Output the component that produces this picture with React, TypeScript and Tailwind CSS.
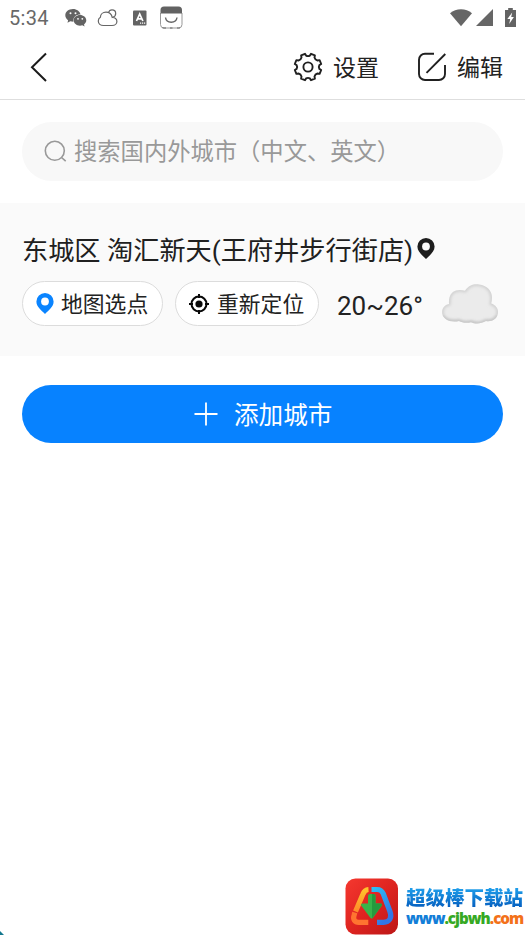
import type { ReactNode } from 'react';

const fontStack = "font-['Roboto','Noto_Sans_CJK_SC',sans-serif]";

function StatusBar() {
  return (
    <div className="flex h-[36px] items-center pb-px pl-[9px] pr-[9px] text-[#666]">
      <span className="w-[56px] pt-px text-[20px] leading-[24px] tracking-[0.3px] text-[#686868]">5:34</span>
      <svg width="22" height="20" viewBox="0 0 22 20" fill="#636363">
        <path d="M8 1C3.6 1 .3 3.8.3 7.3c0 2 1.100 3.700 2.800 4.900L2.500 14.700l2.800-1.400c1 .3 2 .4 3.100.4C7.700 9.300 11 6.600 15.600 6.600 14.900 3.300 11.800 1 8 1z" />
        <path d="M21.300 12.300c0-3-2.900-5.300-6.300-5.300s-6.400 2.300-6.400 5.300 2.900 5.400 6.400 5.400c.8 0 1.600-.1 2.300-.4l2.300 1.300-.6-2.100c1.400-1 2.300-2.500 2.300-4.200z" />
        <g fill="#fff"><circle cx="5.500" cy="5.300" r="1" /><circle cx="10.500" cy="5.300" r="1" /><circle cx="13" cy="10.800" r=".9" /><circle cx="17.300" cy="10.800" r=".9" /></g>
      </svg>
      <svg className="ml-[10px]" width="22" height="20" viewBox="0 0 22 20" fill="none" stroke="#666" strokeWidth="1.200">
        <path d="M6.500 17.500h8.500c3 0 4.900-1.900 4.900-4.100 0-2.500-2-4.100-4.600-3.900C14.500 6 12 4.200 9 4.200c-3.300 0-5.500 2.200-5.600 5C2 10 1.300 11.500 1.300 13c0 2.600 2.200 4.500 5.200 4.500z" />
        <path d="M11.500 4.700C12 2.900 13.300 1.800 15 1.800c2.100 0 3.700 1.600 3.700 3.600 0 1.900-1.100 3.300-3 3.700" />
      </svg>
      <svg className="ml-[14px]" width="14" height="16" viewBox="0 0 14 16">
        <rect x="0" y="0.500" width="13.500" height="15" rx="1" fill="#636363" />
        <path d="M3.500 11 6.700 4 9.900 11M4.700 8.800h4" fill="none" stroke="#fff" strokeWidth="1.700" />
        <path d="M7 13.200h1.200M9 13.200h1.200M11 13.200h1.200" stroke="#fff" strokeWidth="1.200" />
      </svg>
      <svg className="ml-[13px]" width="23" height="23" viewBox="0 0 23 23">
        <path d="M.5 7V18.500a3.500 3.500 0 0 0 3.500 3.500H18.500a3.500 3.500 0 0 0 3.500-3.500V7" fill="none" stroke="#999" />
        <path d="M2.500 22H6M10 22h2.500M17 22h3" stroke="#666" />
        <path d="M.5 7.500V4A3.500 3.500 0 0 1 4 .5h14.500A3.500 3.500 0 0 1 22 4v3.500z" fill="#626262" />
        <path d="M5.500 11.500c.8 6.300 10.700 6.300 11.500 0" fill="none" stroke="#666" strokeWidth="1.400" />
      </svg>
      <svg className="ml-auto" width="22" height="18" viewBox="0 0 22 18"><path d="M0 4.300C6-1.100 16-1.100 22 4.300L11 17.300z" fill="#666" /></svg>
      <svg className="ml-[4px]" width="17" height="17" viewBox="0 0 17 17"><path d="M17 0v17H0z" fill="#666" /></svg>
      <svg className="ml-[12px]" width="11" height="19" viewBox="0 0 11 19">
        <path d="M3.200 0h4.600v2H11v17H0V2h3.200z" fill="#636363" />
        <path d="M7.200 4.500 2.300 11h2.900l-1 5 4.700-6.900H6.200z" fill="#fff" />
      </svg>
    </div>
  );
}

function GearIcon() {
  return (
    <svg width="30" height="30" viewBox="0 0 30 30" fill="none" stroke="#202020" strokeWidth="1.900" strokeLinejoin="round">
      <path d="M12 1.800 13.100 3.600Q15 4.700 16.900 3.600L18 1.800 21.900 3.400 21.500 5.500Q22.100 7.900 24.500 8.500L26.600 8.100 28.200 12 26.400 13.100Q25.300 15 26.400 16.900L28.200 18 26.600 21.900 24.500 21.500Q22.100 22.100 21.500 24.500L21.900 26.600 18 28.200 16.900 26.400Q15 25.300 13.100 26.400L12 28.200 8.100 26.600 8.500 24.500Q7.900 22.100 5.500 21.500L3.400 21.900 1.800 18 3.600 16.900Q4.700 15 3.600 13.100L1.800 12 3.400 8.100 5.500 8.500Q7.900 7.900 8.500 5.500L8.100 3.400z" />
      <circle cx="15" cy="15" r="4.600" />
    </svg>
  );
}

function Header() {
  return (
    <header className="flex h-[64px] items-center border-b border-[#dedede] pb-px pl-[30px] pr-[22px] text-[23px] leading-[34px] text-[#222]">
      <svg width="18" height="30" viewBox="0 0 18 30" fill="none" stroke="#1b1b1b" strokeWidth="2"><path d="M16 1.500 2 15.200 16 29" /></svg>
      <div className="ml-auto flex items-center">
        <GearIcon />
        <span className="ml-[10px] pt-[3px]">设置</span>
      </div>
      <div className="ml-[38px] flex items-center">
        <svg width="30" height="30" viewBox="0 0 30 30" fill="none" stroke="#202020" strokeWidth="1.900">
          <path d="M17 1.700H8A6 6 0 0 0 2 7.700V22a6 6 0 0 0 6 6h14a6 6 0 0 0 6-6V13M9.500 20.800 28.300 2" />
        </svg>
        <span className="ml-[10px] pt-[3px]">编辑</span>
      </div>
    </header>
  );
}

function Pin({ color, hole, className }: { color: string; hole: string; className: string }) {
  return (
    <svg className={className} viewBox="0 0 18 21">
      <path d="M9 0a8.600 8.600 0 0 0-8.600 8.600C.4 13.800 5.300 17.500 9 21c3.700-3.500 8.600-7.200 8.600-12.400A8.600 8.600 0 0 0 9 0z" fill={color} />
      <circle cx="9" cy="8.500" r="3.900" fill={hole} />
    </svg>
  );
}

function Chip({ className, children }: { className: string; children: ReactNode }) {
  return (
    <button className={`flex h-[45px] items-center rounded-full border border-[#dcdcdc] bg-white text-[21.8px] leading-[32px] text-[#222] ${className}`}>
      {children}
    </button>
  );
}

function Cloud() {
  return (
    <svg width="58" height="40" viewBox="0 0 58 40">
      <defs>
        <clipPath id="cloudShape">
          <path d="M8 20C7.500 13 10 8 15 6.500c3-1 6-.7 9 .3C28 1 33-.3 38 .5c8 .8 13 6.500 13 13 0 2-.2 4-.8 6C55 21 57.500 25 57 29c-.8 6-6 9-12 8-5 3-11 3-15 1.200-5 1.300-9 .3-12-1.200C9 39 2 35 1.200 29.500.6 25 3 21 8 20z" />
        </clipPath>
        <filter id="soft"><feGaussianBlur stdDeviation="1.800" /></filter>
      </defs>
      <g clipPath="url(#cloudShape)">
        <path d="M0 0h58v40H0z" fill="#ebebeb" />
        <path d="M8 20C7.500 13 10 8 15 6.500c3-1 6-.7 9 .3C28 1 33-.3 38 .5c8 .8 13 6.500 13 13 0 2-.2 4-.8 6C55 21 57.500 25 57 29c-.8 6-6 9-12 8-5 3-11 3-15 1.200-5 1.300-9 .3-12-1.200C9 39 2 35 1.200 29.500.6 25 3 21 8 20z" fill="none" stroke="#cdcdcd" strokeWidth="3" filter="url(#soft)" />
        <path d="M1 32c2 5 9 6 17 5 3 2 7 2.500 12 1.200 4 2 10 2 15-1.200 6 1 10-1 12-5" fill="none" stroke="#c2c2c2" strokeWidth="2.500" filter="url(#soft)" />
      </g>
    </svg>
  );
}

function Watermark() {
  return (
    <div className="flex h-[58px] w-[180px] items-center self-end">
      <svg width="54" height="57" viewBox="0 0 54 57" className="shrink-0">
        <defs>
          <linearGradient id="tile" x2="1" y2="1"><stop stopColor="#f5382f" /><stop offset=".5" stopColor="#de2420" /><stop offset="1" stopColor="#bc1717" /></linearGradient>
          <linearGradient id="blueBand" x2=".6" y2="1"><stop stopColor="#2cc0f5" /><stop offset="1" stopColor="#3376e6" /></linearGradient>
          <linearGradient id="goldBand" x2="0" y2="1"><stop stopColor="#ffc32b" /><stop offset="1" stopColor="#ff8a2b" /></linearGradient>
        </defs>
        <rect x=".5" y=".5" width="52.500" height="56" rx="10" fill="url(#tile)" />
        <g fill="none" strokeWidth="5.200" strokeLinejoin="round">
          <path d="M23.500 11.500c-3.500.2-4.500 2-5.500 4.500L10.500 33.500" stroke="url(#goldBand)" />
          <path d="M9.800 34.500 9 37.500c-1.200 4 .8 6.800 4.800 6.800h9.500" stroke="#ff7430" />
          <path d="M26.500 11.500h5.500c3.500 0 5 1.200 6.200 4L44.800 33c2.700 7-.4 11.300-6.300 11.300H32" stroke="url(#blueBand)" />
        </g>
        <path d="M23 18q0-2 2-2h3.500q2 0 2 2v7.500h5c1.600 0 2 1.200 1 2.400L27.800 40c-.8.800-1.500.8-2.300 0l-9-12.100c-1-1.200-.6-2.400 1-2.400H23z" fill="#38b54a" />
        <path d="M27 16h1.500q2 0 2 2v7.500h5c1.600 0 2 1.200 1 2.400L27 40.500z" fill="#269b3e" />
      </svg>
      <div className="ml-[7px] flex flex-col whitespace-nowrap pt-px">
        <div className="bg-linear-to-b from-[#25a9f2] to-[#075dbe] bg-clip-text font-['Noto_Sans_CJK_SC',sans-serif] text-[19.500px] font-black leading-[23px] text-transparent">超级棒下载站</div>
        <div className="flex font-['Open_Sans',sans-serif] text-[15.200px] font-extrabold leading-[21px] tracking-[-1px]">
          <span className="text-[#127ed8]">www</span><span className="text-[#36a923]">.cjbwh</span><span className="text-[#f37119]">.com</span>
        </div>
      </div>
    </div>
  );
}

export default function App() {
  return (
    <div className={`relative flex h-[935px] w-[525px] flex-col overflow-hidden bg-white ${fontStack}`}>
      <StatusBar />
      <Header />
      <div className="mx-[22px] mt-[22px] flex h-[59px] items-center rounded-full bg-[#f8f8f8] pl-[22px] text-[#999]">
        <svg width="23" height="23" viewBox="0 0 23 23" fill="none" stroke="#999" strokeWidth="1.600"><circle cx="10.800" cy="10.800" r="9.500" /><path d="m17.500 17.500 4.200 3.700" /></svg>
        <span className="ml-[7px] text-[23.3px] leading-[34px]">搜索国内外城市（中文、英文）</span>
      </div>
      <section className="mt-[22px] h-[153px] bg-[#fafafa] pl-[22px] pt-[28px]">
        <div className="flex h-[38px] items-center text-[26.200px] leading-[38px] text-[#202020]">
          <span className="whitespace-nowrap pt-[2px]">东城区 淘汇新天(王府井步行街店)</span>
          <Pin color="#1d1d1d" hole="#fafafa" className="-mt-[3px] ml-[4px] h-[21px] w-[18px]" />
        </div>
        <div className="mt-[12px] flex h-[45px] items-center">
          <Chip className="w-[141px] pl-[13px]">
            <Pin color="#0a84ff" hole="#fff" className="mr-[7px] h-[21px] w-[18px]" />
            <span className="pt-[2px]">地图选点</span>
          </Chip>
          <Chip className="ml-[12px] w-[144px] pl-[13px]">
            <svg className="mr-[8px]" width="20" height="20" viewBox="0 0 20 20"><circle cx="10" cy="10" r="7.500" fill="none" stroke="#080808" strokeWidth="2" /><circle cx="10" cy="10" r="3.600" fill="#080808" /><path d="M10 0v4M10 16v4M0 10h4M16 10h4" stroke="#080808" strokeWidth="2" /></svg>
            <span className="pt-[2px]">重新定位</span>
          </Chip>
          <span className="ml-[18px] w-[87px] pt-[4px] text-[26px] leading-[38px] text-[#222]">20~26°</span>
          <div className="ml-[17px]"><Cloud /></div>
        </div>
      </section>
      <button className="mx-[22px] mt-[29px] flex h-[58px] items-center rounded-full bg-[#0782ff] pl-[172px] text-[24.6px] leading-[36px] text-white">
        <svg width="24" height="24" viewBox="0 0 24 24" fill="none" stroke="#fff" strokeWidth="1.800"><path d="M12 .5v23M.5 12h23" /></svg>
        <span className="ml-[16px] pt-[3px]">添加城市</span>
      </button>
      <div className="mt-auto flex items-end justify-between">
        <svg width="4" height="4" viewBox="0 0 4 4"><path d="M0 0 4 4H0z" fill="#13788e" /></svg>
        <Watermark />
      </div>
    </div>
  );
}
